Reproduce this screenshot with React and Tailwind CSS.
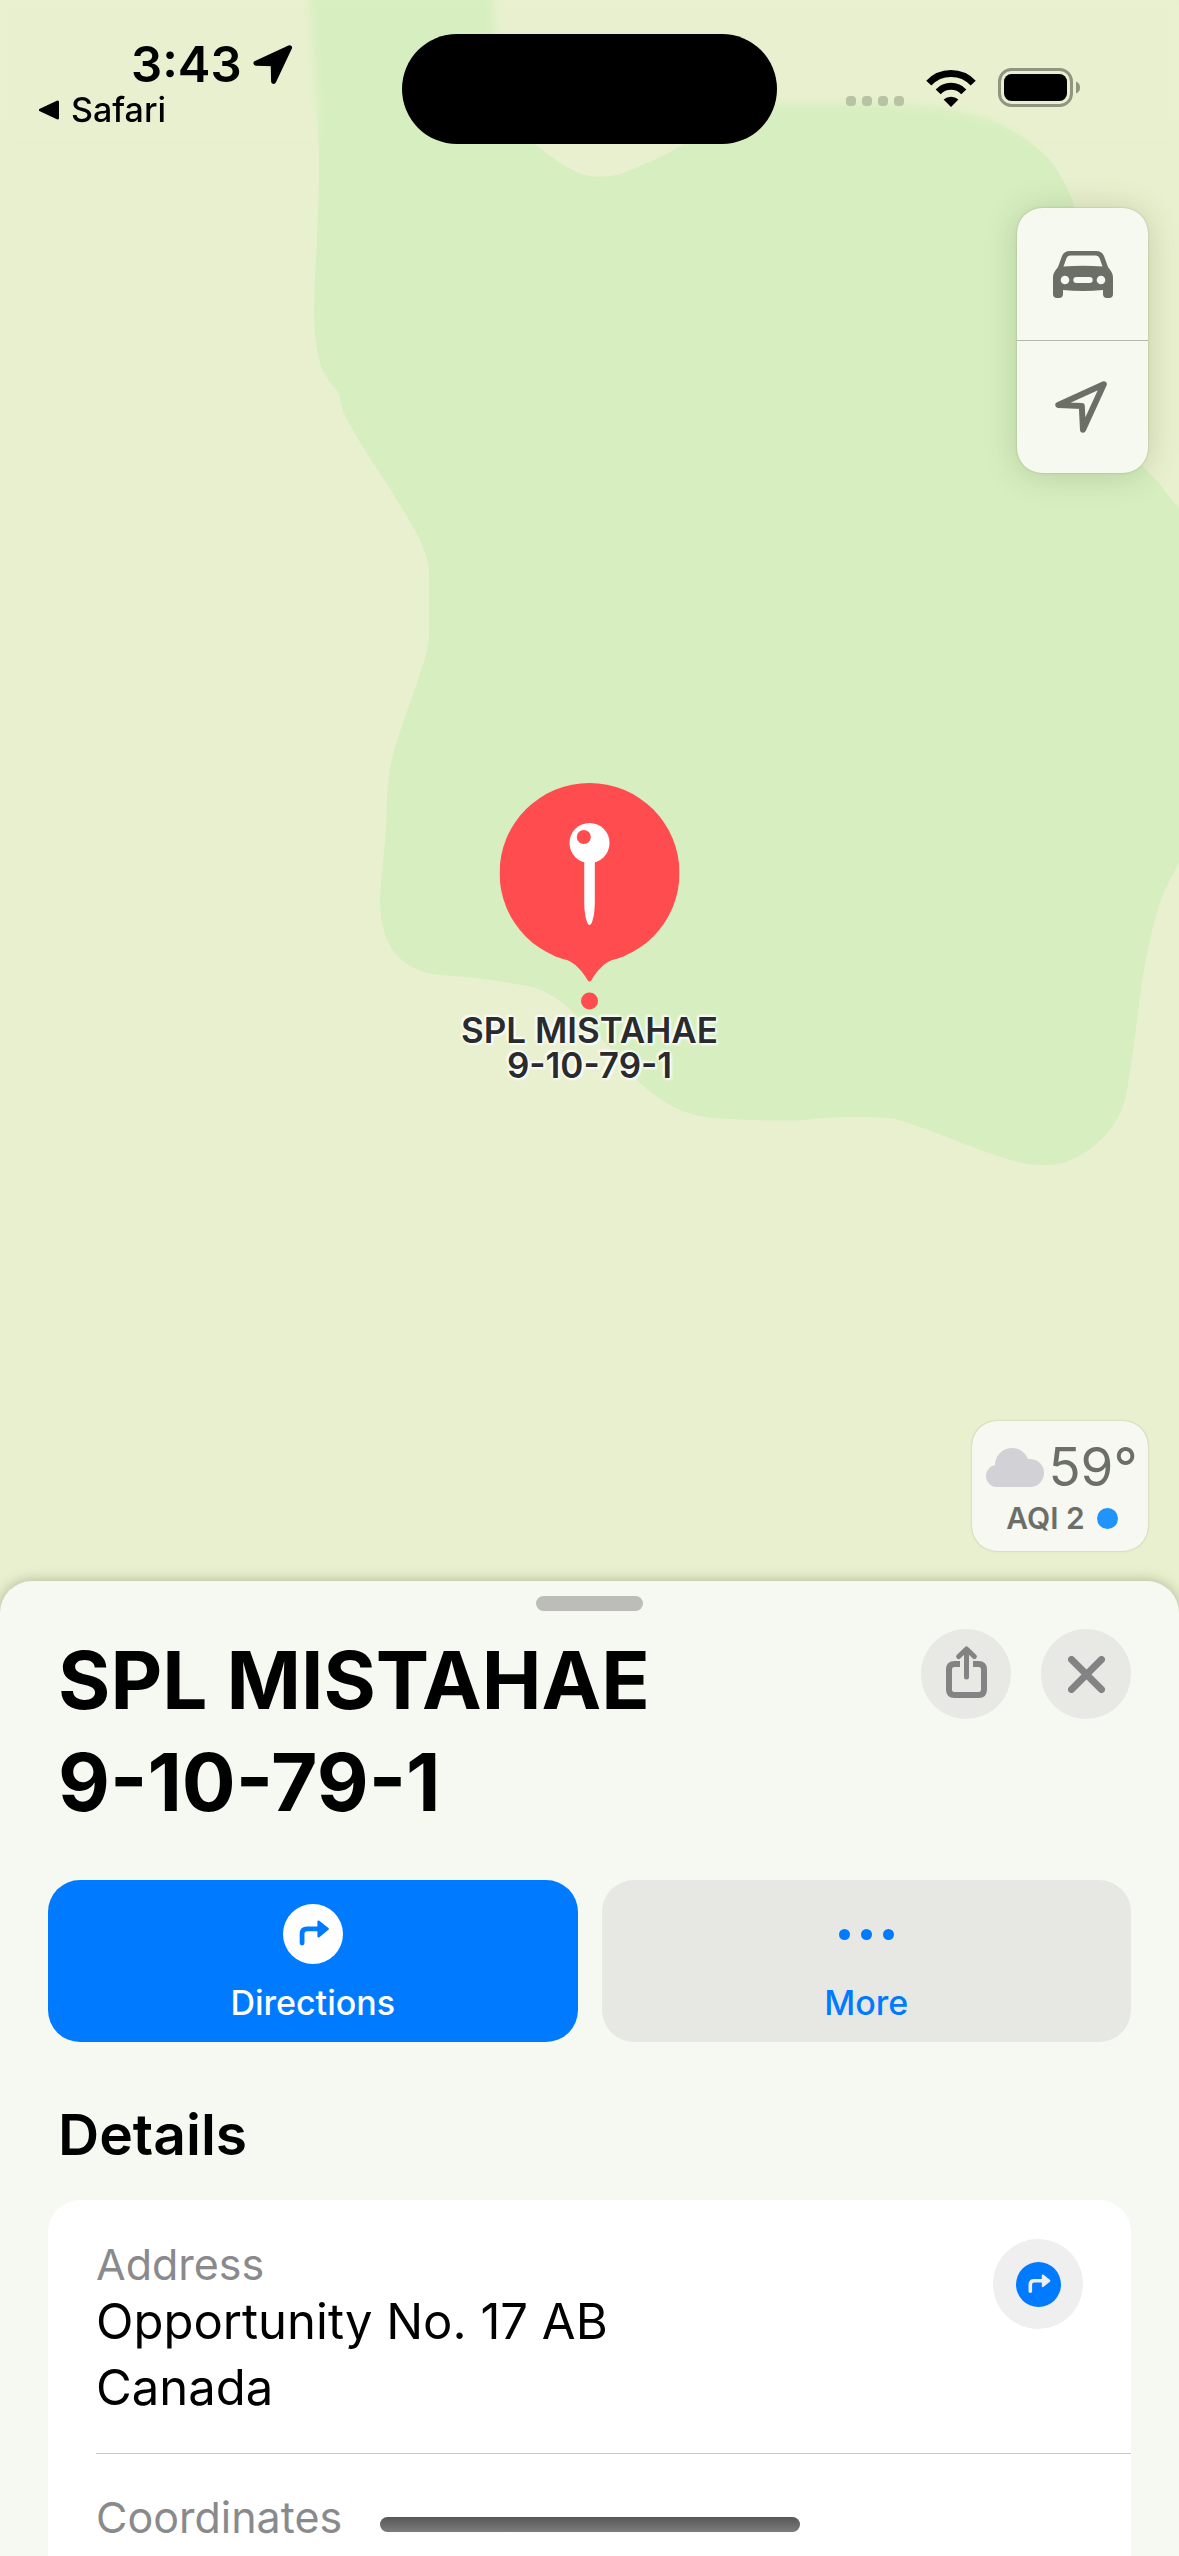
function LocationIcon({ className }) {
  return (
    <svg viewBox="0 0 40 40" className={className} aria-hidden="true">
      <path
        d="M36.5 2.8 3 18.3 20.2 18.8 20.6 36.4Z"
        fill="currentColor"
        stroke="currentColor"
        strokeWidth="5"
        strokeLinejoin="round"
      />
    </svg>
  )
}

function WifiIcon() {
  return (
    <svg viewBox="0 0 50 37" className="w-[50px] h-[37px]" aria-hidden="true">
      <path d="M2.8 13.1A30.5 30.5 0 0 1 47.2 13.1" fill="none" stroke="#000" strokeWidth="7" />
      <path d="M12.2 21.8A17.7 17.7 0 0 1 37.8 21.8" fill="none" stroke="#000" strokeWidth="7" />
      <path d="M25 37 17.6 29.6A11 11 0 0 1 32.4 29.6Z" />
    </svg>
  )
}

function BatteryIcon() {
  return (
    <svg viewBox="0 0 82 39" className="w-[82px] h-[39px]" aria-hidden="true">
      <rect x="1.5" y="1.5" width="72" height="36" rx="12" fill="none" stroke="#90957f" strokeWidth="3" />
      <rect x="6" y="6" width="63" height="27" rx="7.5" />
      <path d="M78 13.5Q82 15 82 19.5T78 25.5Z" fill="#90957f" />
    </svg>
  )
}

function CarIcon() {
  return (
    <svg viewBox="0 0 60 47" className="w-[60px] h-[47px]" aria-hidden="true">
      <path
        fill="#6c6e68"
        fillRule="evenodd"
        d="M0 43V27C0 22 2 20 5 16L9 5C10.5 1.5 13 0 17 0H43C47 0 49.5 1.5 51 5L55 16C58 20 60 22 60 27V43Q60 47 56 47H54Q50 47 50 43V39Q30 41 10 39V43Q10 47 6 47H4Q0 47 0 43Z
           M10.5 15.5 13.5 7Q14.5 4.5 17 4.5H43Q45.5 4.5 46.5 7L49.5 15.5Q30 14 10.5 15.5Z
           M7.7 29a4.3 4.3 0 1 0 8.6 0a4.3 4.3 0 1 0 -8.6 0Z
           M43.7 29a4.3 4.3 0 1 0 8.6 0a4.3 4.3 0 1 0 -8.6 0Z
           M23.3 26H36.7a3 3 0 0 1 0 6H23.3a3 3 0 0 1 0 -6Z"
      />
    </svg>
  )
}

function TrackingIcon() {
  return (
    <svg viewBox="0 0 52 52" className="w-[52px] h-[52px] -ml-1" aria-hidden="true">
      <path d="M48.8 3.2 3.3 24 26.8 25 28 48.7Z" fill="none" stroke="#6c6e68" strokeWidth="6" strokeLinejoin="round" />
    </svg>
  )
}

function CloudIcon() {
  return (
    <svg viewBox="0 0 58 39" className="w-[58px] h-[39px]" fill="#d1d1d6" aria-hidden="true">
      <circle cx="26" cy="17" r="17" />
      <circle cx="44" cy="25" r="14" />
      <circle cx="11" cy="28" r="11" />
      <rect x="11" y="20" width="33" height="19" />
    </svg>
  )
}

function ShareIcon() {
  return (
    <svg viewBox="0 0 41 52" className="w-[41px] h-[52px] -mt-1" fill="none" stroke="#838383" aria-hidden="true">
      <path d="M14 18H8.5Q3 18 3 23.5V43.5Q3 49 8.5 49H32.5Q38 49 38 43.5V23.5Q38 18 32.5 18H27" strokeWidth="6" />
      <path d="M20.5 31V4M12.7 10.5 20.5 3 28.3 10.5" strokeWidth="5" strokeLinecap="round" strokeLinejoin="round" />
    </svg>
  )
}

function CloseIcon() {
  return (
    <svg viewBox="0 0 37 37" className="w-[37px] h-[37px]" aria-hidden="true">
      <path d="M3.5 3.5 33.5 33.5M33.5 3.5 3.5 33.5" stroke="#838383" strokeWidth="7" strokeLinecap="round" />
    </svg>
  )
}

// Turn arrow inside a disc, the disc colour and the arrow colour are swapped between uses
function TurnIcon({ disc, arrow, className }) {
  return (
    <svg viewBox="0 0 45 45" className={className} aria-hidden="true">
      <circle cx="22.5" cy="22.5" r="22.5" fill={disc} />
      <path d="M14.3 29.3V22.5Q14.3 18.7 18.2 18.7H27" fill="none" stroke={arrow} strokeWidth="3.6" strokeLinecap="round" />
      <path d="M26.7 13.3 33.5 18.7 26.7 24.2Z" fill={arrow} stroke={arrow} strokeWidth="1.8" strokeLinejoin="round" />
    </svg>
  )
}

function MapBackground() {
  return (
    <svg
      viewBox="0 0 1179 1621"
      preserveAspectRatio="xMidYMid slice"
      className="absolute inset-0 w-full h-full"
      aria-hidden="true"
    >
      <rect width="1179" height="1621" fill="#e9f0cf" />
      <path
        fill="#d7efc0"
        d="M309 -20C312 60 319 110 319 160C319 220 314 280 314 315C315 345 318 360 324 373C330 384 338 390 340 397C341 410 346 418 352 428C366 455 384 478 398 502C412 524 428 550 429 571V635C428 655 422 665 418 680C404 720 392 750 389 775C386 800 387 830 384 850C382 875 380 885 380 906C382 950 405 972 440 975C475 977 505 982 532 987C560 996 572 1012 590 1028C615 1050 622 1066 640 1083C665 1105 685 1116 715 1118C755 1121 780 1121 805 1120C840 1116 870 1116 895 1119C940 1132 980 1153 1022 1163Q1045 1167 1063 1163C1095 1152 1122 1125 1127 1090C1134 1050 1138 1010 1143 975C1150 940 1156 910 1164 892L1179 862H1200V530L1179 508C1165 492 1158 480 1148 472C1110 430 1085 300 1074 205C1068 188 1060 172 1048 158C1020 130 985 112 930 107C890 103 830 103 770 104C730 110 700 130 681 146C660 158 640 166 628 171Q608 180 585 175C565 168 550 156 535 144C505 120 494 60 492 -20Z"
      />
    </svg>
  )
}

function StatusBar() {
  return (
    <header className="relative grid grid-cols-[1fr_375px_1fr] h-[152px] pt-[34px] text-black">
      {/* softens the map behind the status bar */}
      <div className="absolute inset-0 backdrop-blur-[5px] [mask-image:linear-gradient(black_70%,transparent)]" />
      <div className="relative">
        <div className="flex items-center gap-[11px] h-[62px] pl-[131px]">
          <time className="text-[49px] leading-[62px] font-semibold">3:43</time>
          <LocationIcon className="w-10 h-10" />
        </div>
        <a href="#safari" className="flex items-center gap-3 w-max pl-[39px] text-[34px] leading-7 font-medium">
          <svg viewBox="0 0 20 20" className="w-5 h-5" aria-hidden="true">
            <path d="M1.5 10 18.5 2V18Z" stroke="#000" strokeWidth="3" strokeLinejoin="round" />
          </svg>
          Safari
        </a>
      </div>
      <div className="relative h-[110px] rounded-full bg-black" />
      <div className="relative flex items-end gap-[22px] h-[73px] pl-[69px]">
        <div className="flex gap-1.5 pb-px">
          {[0, 1, 2, 3].map((dot) => (
            <span key={dot} className="w-2.5 h-2.5 rounded-[4px] bg-[#b8c3a3]" />
          ))}
        </div>
        <WifiIcon />
        <BatteryIcon />
      </div>
    </header>
  )
}

function MapPin() {
  return (
    <div className="absolute top-[783px] left-1/2 -translate-x-1/2 flex flex-col items-center">
      <svg viewBox="0 0 180 230" className="w-[180px] h-[230px]" aria-hidden="true">
        <circle cx="90" cy="90" r="90" fill="#ff4c4f" />
        <path d="M58 173 63 175C76 179 84 190 88 197Q90 200 92 197C96 190 104 179 117 175L122 173Z" fill="#ff4c4f" />
        <circle cx="90" cy="218" r="8.5" fill="#ff4c4f" />
        <path d="M84.7 76H95.3V118C95.3 130 93.5 138 91.5 141Q90 143 88.5 141C86.5 138 84.7 130 84.7 118Z" fill="#fff" />
        <circle cx="90" cy="60" r="20" fill="#fff" />
        <circle cx="84.3" cy="54" r="7" fill="#ff4c4f" />
      </svg>
      <p className="text-center text-[35px] leading-[35px] font-semibold text-[#2a2b2d] [text-shadow:0_0_3px_#fff,0_0_3px_#fff,0_0_4px_#fff,2px_2px_2px_#ffffffb0,-2px_-2px_2px_#ffffffb0]">
        SPL MISTAHAE
        <br />
        9-10-79-1
      </p>
    </div>
  )
}

function App() {
  return (
    <div className="flex flex-col h-screen w-full overflow-hidden bg-[#e9f0cf] font-['Inter',sans-serif]">
      {/* Map */}
      <section className="relative flex flex-col grow">
        <MapBackground />
        <StatusBar />
        <MapPin />

        <div className="relative mt-14 mr-[31px] self-end flex flex-col w-[131px] rounded-[25px] bg-[#f5f9f0] shadow-[0_2px_32px_rgba(60,80,30,0.22),0_0_2px_rgba(60,80,30,0.3)]">
          <button type="button" aria-label="Map mode" className="flex items-center justify-center h-[133px] border-b border-[#b3b8ad]">
            <CarIcon />
          </button>
          <button type="button" aria-label="Show my location" className="flex items-center justify-center h-[132px]">
            <TrackingIcon />
          </button>
        </div>

        <div className="relative mt-auto mb-[70px] mr-[31px] self-end flex flex-col items-center w-[176px] h-[130px] pt-5 pl-1 rounded-[25px] bg-[#f6f8f1] text-[#6c6e68] shadow-[0_0_2px_rgba(60,80,30,0.35)]">
          <div className="flex items-center gap-1 text-[53px] leading-[52px]">
            <CloudIcon />
            59°
          </div>
          <div className="flex items-center gap-3 text-[30px] leading-[50px] font-semibold">
            AQI 2
            <span className="w-[21px] h-[21px] rounded-full bg-[#2094fa]" />
          </div>
        </div>
      </section>

      {/* Place sheet */}
      <main className="relative shrink-0 -mt-10 px-12 pt-[15px] rounded-t-[32px] bg-[#f6f8f2] text-black shadow-[0_0_14px_rgba(60,70,30,0.35)]">
        <div className="mx-auto w-[107px] h-[15px] rounded-full bg-[#bcbdb9]" />

        <div className="flex items-start mt-[18px]">
          <h1 className="grow ml-2.5 text-[80px] leading-[102px] font-bold">
            SPL MISTAHAE
            <br />
            9-10-79-1
          </h1>
          <div className="flex gap-[30px]">
            <button type="button" aria-label="Share" className="flex items-center justify-center w-[90px] h-[90px] rounded-full bg-[#e8e9e5]">
              <ShareIcon />
            </button>
            <button type="button" aria-label="Close" className="flex items-center justify-center w-[90px] h-[90px] rounded-full bg-[#e8e9e5]">
              <CloseIcon />
            </button>
          </div>
        </div>

        <div className="grid grid-cols-2 gap-6 mt-[47px] text-[34px] leading-10 font-medium">
          <button type="button" className="flex flex-col items-center gap-[19px] h-[162px] pt-6 rounded-[32px] bg-[#007aff] text-white">
            <TurnIcon disc="#fff" arrow="#007aff" className="w-[60px] h-[60px]" />
            Directions
          </button>
          <button type="button" className="flex flex-col items-center gap-[19px] h-[162px] pt-6 rounded-[32px] bg-[#e7e8e4] text-[#007aff]">
            <span className="flex items-center gap-[11px] h-[60px]">
              <span className="w-[11px] h-[11px] rounded-full bg-[#007aff]" />
              <span className="w-[11px] h-[11px] rounded-full bg-[#007aff]" />
              <span className="w-[11px] h-[11px] rounded-full bg-[#007aff]" />
            </span>
            More
          </button>
        </div>

        <h2 className="mt-[58px] ml-2.5 text-[57px] leading-[70px] font-semibold">Details</h2>

        <dl className="mt-[30px] pl-12 rounded-t-[32px] bg-white">
          <div className="flex items-start justify-between pt-[39px] pb-8 pr-12 border-b border-[#c6c6c8]">
            <div>
              <dt className="text-[43px] leading-[50px] text-[#8a8a8d]">Address</dt>
              <dd className="text-[49px] leading-[66px]">
                Opportunity No. 17 AB
                <br />
                Canada
              </dd>
            </div>
            <button type="button" aria-label="Directions to address" className="flex items-center justify-center w-[90px] h-[90px] rounded-full bg-[#efefef]">
              <TurnIcon disc="#007aff" arrow="#efefef" className="w-[45px] h-[45px]" />
            </button>
          </div>
          <div className="pt-[38px] pb-3.5">
            <dt className="text-[43px] leading-[50px] text-[#8a8a8d]">Coordinates</dt>
          </div>
        </dl>

        {/* Home indicator */}
        <div className="absolute bottom-6 left-1/2 -translate-x-1/2 w-[420px] h-[15px] rounded-full bg-linear-to-b from-[#575757] to-[#7c7c7c]" />
      </main>
    </div>
  )
}

export default App
